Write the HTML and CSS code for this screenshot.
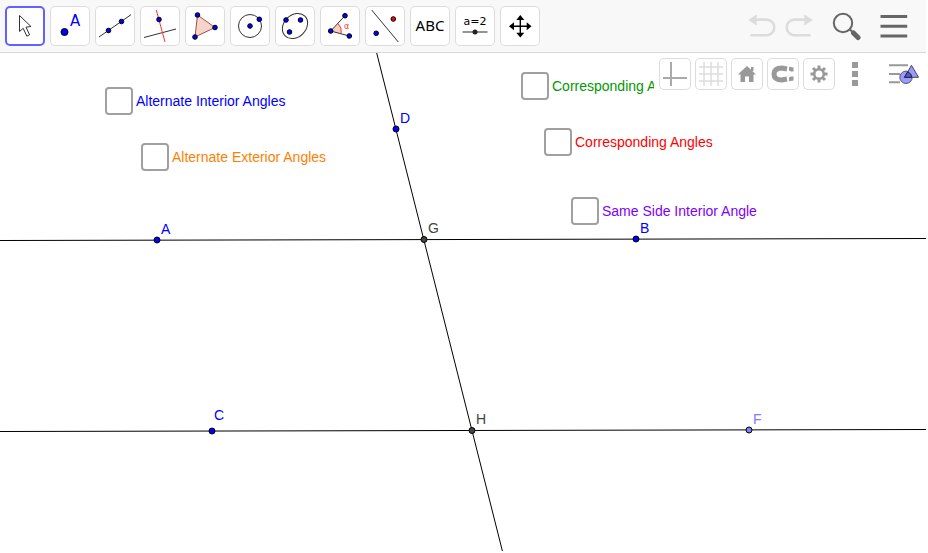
FILE: index.html
```html
<!DOCTYPE html>
<html lang="en">
<head>
<meta charset="utf-8">
<title>Angles and Transversals</title>
<link rel="stylesheet" href="styles.css">
</head>
<body>
<header class="toolbar">
  <div class="tools">
    <button class="tool selected" type="button" aria-label="Move"><svg viewBox="0 0 40 40"><path d="M14.5 9.5V25.5L18.2 22.3L21.8 30.2L24.6 28.8L21 21.2L26 20.5Z" fill="#fff" stroke="#333"/></svg></button>
    <button class="tool" type="button" aria-label="Point"><svg viewBox="0 0 40 40"><circle class="pt" cx="14.5" cy="26" r="3.5"/><text class="point-letter" x="20" y="20">A</text></svg></button>
    <button class="tool" type="button" aria-label="Line"><svg viewBox="0 0 40 40"><path class="ln" d="M4 31L36 8.7"/><circle class="pt" cx="13.5" cy="24.5" r="2.3"/><circle class="pt" cx="26.5" cy="15.5" r="2.3"/></svg></button>
    <button class="tool" type="button" aria-label="Perpendicular line"><svg viewBox="0 0 40 40"><path class="ln" d="M4 31.5L36 23"/><path class="ln red" d="M16.3 4L25 36"/><circle class="pt" cx="19" cy="13.5" r="2.3"/></svg></button>
    <button class="tool" type="button" aria-label="Polygon"><svg viewBox="0 0 40 40"><path d="M12.5 9L30 21.5L10 31Z" fill="#f5d5cb" stroke="#a64f38"/><circle class="pt" cx="12.5" cy="9" r="2.3"/><circle class="pt" cx="30" cy="21.5" r="2.3"/><circle class="pt" cx="10" cy="31" r="2.3"/></svg></button>
    <button class="tool" type="button" aria-label="Circle"><svg viewBox="0 0 40 40"><circle class="ln" cx="20" cy="20" r="11.5"/><circle class="pt" cx="20" cy="20" r="2.3"/><circle class="pt" cx="29.3" cy="13.3" r="2.3"/></svg></button>
    <button class="tool" type="button" aria-label="Ellipse"><svg viewBox="0 0 40 40"><ellipse class="ln" cx="20" cy="20" rx="14" ry="11" transform="rotate(-45 20 20)"/><circle class="pt" cx="11" cy="14" r="2.3"/><circle class="pt" cx="25.5" cy="14" r="2.3"/><circle class="pt" cx="14.5" cy="26" r="2.3"/></svg></button>
    <button class="tool" type="button" aria-label="Angle"><svg viewBox="0 0 40 40"><path d="M10.7 25L18.3 17.3Q22 21.5 21.3 27.5Z" fill="#f5cfc8"/><path class="ln" d="M25 9.7L10.7 25L29.3 30"/><path class="ln red" d="M18 17.5Q22.3 21.8 21.2 27.5"/><circle class="pt" cx="10.7" cy="25" r="2.3"/><circle class="pt" cx="25" cy="9.7" r="2.3"/><circle class="pt" cx="29.3" cy="30" r="2.3"/><text class="alpha" x="24" y="23">α</text></svg></button>
    <button class="tool" type="button" aria-label="Reflect about line"><svg viewBox="0 0 40 40"><path class="ln" d="M6.7 4L33.3 36"/><circle class="pt pt-red" cx="28.3" cy="13" r="2.3"/><circle class="pt" cx="11.2" cy="27.3" r="2.3"/></svg></button>
    <button class="tool" type="button" aria-label="Text"><svg viewBox="0 0 40 40"><text class="abc" x="20" y="25">ABC</text></svg></button>
    <button class="tool" type="button" aria-label="Slider"><svg viewBox="0 0 40 40"><text class="value" x="20" y="19">a=2</text><path d="M7.5 26H32.5" stroke="#666" stroke-width="1.4"/><circle cx="20" cy="26" r="2.5" fill="#222"/></svg></button>
    <button class="tool" type="button" aria-label="Move graphics view"><svg viewBox="0 0 40 40"><path d="M20.3 12V29M12 20.3H29" stroke="#000" stroke-width="1.4"/><path d="M20.3 9L24.3 14H16.3ZM20.3 31.5L24.3 26.7H16.3ZM9 20.3L14 16.3V24.3ZM31.5 20.3L26.7 16.3V24.3Z"/></svg></button>
  </div>
  <nav class="actions">
    <button class="action" type="button" aria-label="Undo" disabled><svg viewBox="0 0 30 30"><path d="M2.5 24.2H18.5A7.8 7.8 0 0 0 18.5 8.6H8" fill="none" stroke="#dcdcdc" stroke-width="2.6"/><path d="M0.2 9L8.7 3.500V14.5Z" fill="#dcdcdc"/></svg></button>
    <button class="action" type="button" aria-label="Redo" disabled><svg viewBox="0 0 30 30"><path d="M25.5 24.2H9.5A7.8 7.8 0 0 1 9.5 8.6H20" fill="none" stroke="#dcdcdc" stroke-width="2.6"/><path d="M27.8 9L19.3 3.5V14.5Z" fill="#dcdcdc"/></svg></button>
    <button class="action search" type="button" aria-label="Search"><svg viewBox="0 0 30 30"><circle cx="11" cy="12" r="9.2" fill="none" stroke="#666" stroke-width="2"/><path d="M18 18.5L21 21.5" stroke="#666" stroke-width="2"/><path d="M21.5 22L26 26.5" stroke="#666" stroke-width="5" stroke-linecap="round"/></svg></button>
    <button class="action" type="button" aria-label="Menu"><svg viewBox="0 0 30 30"><path d="M0.5 5.5H27.2M0.5 15.3H27.2M0.5 25H27.2" stroke="#666" stroke-width="3"/></svg></button>
  </nav>
</header>
<main class="view">
  <svg class="canvas" role="img" aria-label="Two lines cut by a transversal">
    <path class="geo-line" d="M0 187.5L926 185.5L1852 183.5M0 378.5L926 376.5L1852 374.5M376.7 0L502.4 498L628.1 996"/>
    <circle class="geo-point" cx="157" cy="187" r="3"/><text class="geo-label" x="161" y="181">A</text>
    <circle class="geo-point" cx="636" cy="186" r="3"/><text class="geo-label" x="640" y="180">B</text>
    <circle class="geo-point" cx="212" cy="378" r="3"/><text class="geo-label" x="214" y="367">C</text>
    <circle class="geo-point" cx="396" cy="76" r="3"/><text class="geo-label" x="400" y="70">D</text>
    <circle class="geo-point dependent" cx="424" cy="186.5" r="3"/><text class="geo-label dependent" x="428" y="180">G</text>
    <circle class="geo-point dependent" cx="472" cy="377.5" r="3"/><text class="geo-label dependent" x="476" y="371">H</text>
    <circle class="geo-point on-path" cx="749" cy="377" r="3"/><text class="geo-label on-path" x="753" y="371">F</text>
  </svg>
  <label class="check alt-interior"><input type="checkbox">Alternate Interior Angles</label>
  <label class="check alt-exterior"><input type="checkbox">Alternate Exterior Angles</label>
  <label class="check corr-green"><input type="checkbox">Corresponding Angles</label>
  <label class="check corr-red"><input type="checkbox">Corresponding Angles</label>
  <label class="check same-side"><input type="checkbox">Same Side Interior Angle</label>
  <div class="stylebar">
    <button class="style-button" type="button" aria-label="Axes"><svg viewBox="0 0 32 32"><path d="M4 20H28M12 4V28" stroke="#aaa" stroke-width="2"/></svg></button>
    <button class="style-button" type="button" aria-label="Grid"><svg viewBox="0 0 32 32"><path d="M4 9H28M4 16H28M4 23H28M9 4V28M16 4V28M23 4V28" stroke="#ddd" stroke-width="1.5"/></svg></button>
    <button class="style-button" type="button" aria-label="Standard view"><svg viewBox="0 0 32 32"><path d="M16 8L25 16.5H22.5V24H18V18.5H14V24H9.5V16.5H7L10 13.5L16 8ZM20 9H22.5V13H20Z" fill="#999"/></svg></button>
    <button class="style-button" type="button" aria-label="Point capturing"><svg viewBox="0 0 32 32"><path d="M20 11L15 10Q7 10 7 16T15 22L20 21" fill="none" stroke="#999" stroke-width="5"/><path d="M22 8.8L26.500 9.5V13.5H24L22 12.500ZM22 19.500L24 18.5H26.500V22.5L22 23.2Z" fill="#999"/></svg></button>
    <button class="style-button" type="button" aria-label="Settings"><svg viewBox="0 0 32 32"><circle cx="16" cy="16" r="4.8" fill="none" stroke="#999" stroke-width="2.6"/><path d="M16 7.5V11M16 21V24.5M7.5 16H11M21 16H24.5M10 10L12.5 12.5M19.5 19.5L22 22M10 22L12.5 19.5M19.5 12.5L22 10" stroke="#999" stroke-width="3"/></svg></button>
    <button class="style-button plain" type="button" aria-label="More"><svg viewBox="0 0 32 32"><path d="M13 4H19V10H13ZM13 13H19V19H13ZM13 22H19V28H13Z" fill="#999"/></svg></button>
    <button class="style-button plain views" type="button" aria-label="Views"><svg viewBox="0 0 32 32"><path d="M1 7.3H20M1 16H12M1 24.3H12" stroke="#999" stroke-width="2"/><circle cx="18" cy="19.3" r="6.2" fill="#9999ff" stroke="#556"/><path d="M23.5 7.3L30.5 19.3H16.5Z" fill="#9999ff" stroke="#445"/><path d="M19.8 13.7Q23.5 15.5 23.9 19.3H16.5Z" fill="#5555dd" stroke="#222"/></svg></button>
  </div>
</main>
</body>
</html>
```
FILE: styles.css
```css
* {
  box-sizing: border-box;
}

html,
body {
  height: 100%;
}

body {
  display: flex;
  flex-direction: column;
  margin: 0;
  padding: 0 2px 2px 0;
  background: #fff;
  font-family: "Liberation Sans", Arial, sans-serif;
  font-size: 14px;
}

button {
  padding: 0;
  border: 0;
  background: none;
}

svg {
  display: block;
}

.toolbar {
  display: flex;
  justify-content: space-between;
  align-items: center;
  padding: 6px 16px 6px 5px;
  border-bottom: 1px solid #d8d8d8;
  background: #f8f8f8;
}

.tools {
  display: flex;
  gap: 5px;
}

.tool {
  width: 40px;
  height: 40px;
  border-radius: 5px;
  background: #fff;
  box-shadow: inset 0 0 0 1px #dcdcdc;
}

.tool.selected {
  box-shadow: inset 0 0 0 2px #6161ff;
}

.pt {
  fill: #00f;
  stroke: #000;
}

.pt-red {
  fill: #f00;
}

.ln {
  fill: none;
  stroke: #333;
}

.ln.red {
  stroke: #f33;
}

.point-letter {
  fill: #00f;
  font: 15px "DejaVu Sans", sans-serif;
}

.alpha {
  fill: #f33;
  font: 8px "DejaVu Sans", sans-serif;
}

.abc {
  font: 15px "Noto Sans", sans-serif;
  text-anchor: middle;
}

.value {
  font: 11px "DejaVu Sans", sans-serif;
  text-anchor: middle;
}

.actions {
  display: flex;
  gap: 7px;
}

.action {
  width: 30px;
  height: 30px;
}

.search {
  margin: 0 11px 0 10px;
}

.view {
  position: relative;
  flex: 1;
  overflow: hidden;
}

.canvas {
  position: absolute;
  width: 100%;
  height: 100%;
}

.geo-line {
  fill: none;
  stroke: #000;
}

.geo-point {
  fill: #00f;
  stroke: #000;
}

.geo-point.dependent {
  fill: #444;
}

.geo-point.on-path {
  fill: #7d7dff;
}

.geo-label {
  fill: #00f;
}

.geo-label.dependent {
  fill: #444;
}

.geo-label.on-path {
  fill: #7d7dff;
}

.check {
  position: absolute;
  display: flex;
  align-items: center;
  gap: 3px;
  white-space: nowrap;
}

.check input {
  appearance: none;
  width: 28px;
  height: 28px;
  margin: 0;
  border: 2px solid #a0a0a0;
  border-radius: 4px;
  background: #fff;
}

.alt-interior {
  left: 105px;
  top: 34px;
  color: #00f;
}

.alt-exterior {
  left: 141px;
  top: 90px;
  color: #ff7f00;
}

.corr-green {
  left: 521px;
  top: 19px;
  color: #090;
}

.corr-red {
  left: 544px;
  top: 75px;
  color: #f00;
}

.same-side {
  left: 571px;
  top: 144px;
  color: #7d00ff;
}

.stylebar {
  position: absolute;
  top: 0;
  right: 0;
  display: flex;
  gap: 4px;
  padding: 5px 6px 5px 5px;
  background: #fff;
}

.style-button {
  width: 32px;
  height: 32px;
  border-radius: 5px;
  box-shadow: inset 0 0 0 1px #dcdcdc;
}

.style-button.plain {
  box-shadow: none;
}

.views {
  margin-left: 13px;
}
```
